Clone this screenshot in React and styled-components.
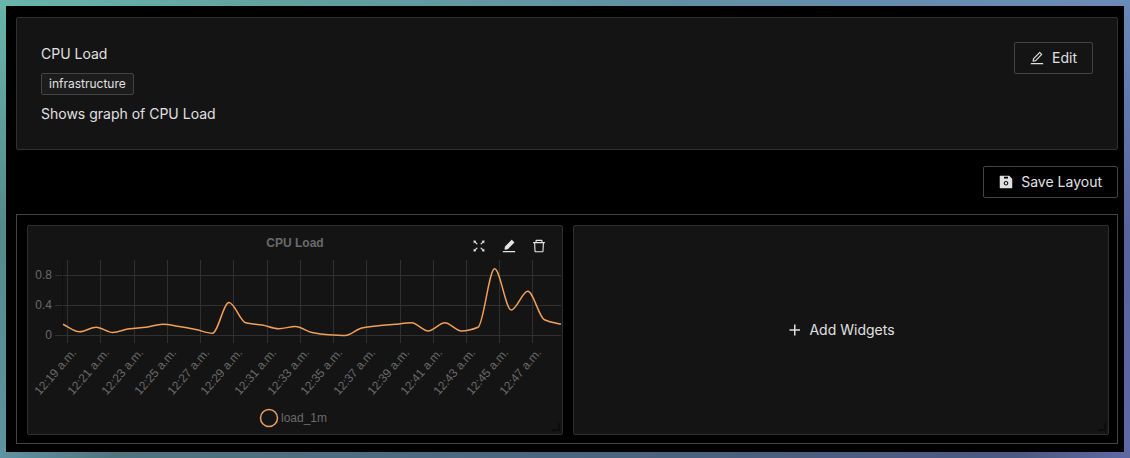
import React from "react";
import styled, { createGlobalStyle } from "styled-components";
import {
  AiOutlineEdit,
  AiFillSave,
  AiOutlineFullscreen,
  AiFillEdit,
  AiOutlineDelete,
} from "react-icons/ai";

const GlobalStyle = createGlobalStyle`
  * { box-sizing: border-box; }
  body {
    margin: 0;
    font-family: Inter, "Liberation Sans", sans-serif;
    font-size: 14px;
    line-height: 22px;
    color: #e0e0e0;
    background: #000;
  }
`;

const Backdrop = styled.div`
  min-height: 100vh;
  padding: 6px;
  background:
    linear-gradient(90deg, #68b5aa, #62a09f 25%, #6190a4 60%, #6a8ab8 100%) top / 100% 6px no-repeat,
    linear-gradient(90deg, #5f93a0, #4e7480 10%, #4a657e 50%, #4c5882 90%, #6068a4 100%) bottom / 100% 6px no-repeat,
    linear-gradient(180deg, #68b5aa, #558a8c 50%, #5f93a0 100%) left / 6px 100% no-repeat,
    linear-gradient(180deg, #6a8ab8, #58639a 50%, #6068a4 100%) right / 6px 100% no-repeat;
`;

const Page = styled.main`
  display: flex;
  flex-direction: column;
  gap: 16px;
  min-height: calc(100vh - 12px);
  padding: 11px 6px 8px 10px;
  background: #000;
`;

const SummaryCard = styled.section`
  display: flex;
  justify-content: space-between;
  align-items: flex-start;
  padding: 24px;
  border: 1px solid #303030;
  border-radius: 2px;
  background: #141414;
`;

const Details = styled.div`
  display: flex;
  flex-direction: column;
  align-items: flex-start;
  gap: 8px;
  padding-top: 1px;
`;

const Line = styled.p`
  margin: 0;
`;

const Title = styled.h1`
  margin: 0;
  font-size: 14px;
  font-weight: 400;
`;

const Tag = styled.span`
  padding: 0 7px;
  border: 1px solid #434343;
  border-radius: 2px;
  background: #1c1c1c;
  font-size: 12px;
  line-height: 20px;
`;

const Button = styled.button`
  display: inline-flex;
  align-items: center;
  gap: 7px;
  height: 32px;
  padding: 0 15px 0 14px;
  border: 1px solid ${(p) => (p.$plain ? "transparent" : "#434343")};
  border-radius: 2px;
  background: transparent;
  color: inherit;
  font: inherit;
  cursor: pointer;

  svg {
    width: 16px;
    height: 16px;
  }
`;

const Actions = styled.div`
  display: flex;
  justify-content: flex-end;
`;

const Board = styled.section`
  display: grid;
  grid-template-columns: 1fr 1fr;
  gap: 10px;
  padding: 10px 8px 8px 10px;
  border: 1px solid #434343;
`;

const Panel = styled.article`
  position: relative;
  display: flex;
  flex-direction: column;
  align-items: stretch;
  justify-content: center;
  border: 1px solid #303030;
  border-radius: 2px;
  background: #141414;

  &::after {
    content: "";
    position: absolute;
    right: 2px;
    bottom: 3px;
    width: 6px;
    height: 6px;
    border-right: 2px solid #0c0c0c;
    border-bottom: 2px solid #0c0c0c;
  }
`;

const AddButton = styled(Button)`
  align-self: center;
`;

const Tools = styled.div`
  position: absolute;
  top: 12px;
  right: 15px;
  display: flex;
  gap: 14px;
`;

const ToolButton = styled.button`
  display: flex;
  padding: 0;
  border: 0;
  background: transparent;
  color: #e4e4e4;
  font-size: 16px;
  cursor: pointer;
`;

const Chart = styled.svg`
  display: block;
  width: 100%;
  height: auto;
  font-family: "Liberation Sans", Arial, sans-serif;
  font-size: 12px;
  fill: #6a6a6a;
`;

const gridX = [39, 72, 106, 139, 172, 205, 239, 272, 305, 338, 372, 405, 438, 471, 504];
const yTicks = [
  ["0.8", 49],
  ["0.4", 79],
  ["0", 109],
];

const step = 16.6;
const loads = [
  0.15, 0.05, 0.11, 0.04, 0.09, 0.11, 0.15, 0.12, 0.08, 0.03, 0.44, 0.17, 0.14, 0.09, 0.12,
  0.04, 0.01, 0.0, 0.1, 0.13, 0.15, 0.17, 0.06, 0.17, 0.06, 0.11, 0.89, 0.34, 0.59, 0.21, 0.15,
];

// Monotone cubic interpolation, so that the curve never overshoots a reading.
function curve(values) {
  const pts = values.map((v, i) => [35 + i * step, 109.5 - v * 75]);
  const slopes = pts.slice(1).map((p, i) => (p[1] - pts[i][1]) / step);
  const tangents = pts.map((_, i) => {
    if (i === 0) return slopes[0];
    if (i === pts.length - 1) return slopes[i - 1];
    const a = slopes[i - 1];
    const b = slopes[i];
    return a * b <= 0 ? 0 : (2 * a * b) / (a + b);
  });
  return pts.reduce((d, [x, y], i) => {
    if (i === 0) return `M${x} ${y}`;
    const [px, py] = pts[i - 1];
    const h = step / 3;
    return `${d}C${px + h} ${py + tangents[i - 1] * h} ${x - h} ${y - tangents[i] * h} ${x} ${y}`;
  }, "");
}

function PlusIcon() {
  return (
    <svg viewBox="0 0 16 16" aria-hidden="true">
      <path d="M8.75 2.5V13.5M3.5 8H14" fill="none" stroke="currentColor" strokeWidth="1.5" />
    </svg>
  );
}

function LoadChart() {
  return (
    <Chart viewBox="0 0 534 208" role="img" aria-label="CPU Load">
      <text x="267" y="21" textAnchor="middle" fontWeight="700">CPU Load</text>
      <g stroke="#303030">
        {gridX.map((x) => (
          <path key={x} d={`M${x + 0.5} 34V117`} />
        ))}
        {yTicks.map(([label, y]) => (
          <path key={label} d={`M27 ${y + 0.5}H533`} />
        ))}
      </g>
      <path d="M34.5 34V109" stroke="#0f0f0f" />
      {yTicks.map(([label, y]) => (
        <text key={label} x="24" y={y + 4} textAnchor="end">{label}</text>
      ))}
      {gridX.map((x, i) => (
        <text key={x} transform={`translate(${x + 10} 127) rotate(-49)`} textAnchor="end">
          {`12:${19 + i * 2} a.m.`}
        </text>
      ))}
      <path d={curve(loads)} fill="none" stroke="#f0a058" strokeWidth="1.5" />
      <circle cx="241" cy="192" r="8.5" fill="none" stroke="#e8a060" strokeWidth="1.5" />
      <text x="253" y="196">load_1m</text>
    </Chart>
  );
}

export default function App() {
  return (
    <>
      <GlobalStyle />
      <Backdrop>
        <Page>
          <SummaryCard>
            <Details>
              <Title>CPU Load</Title>
              <Tag>infrastructure</Tag>
              <Line>Shows graph of CPU Load</Line>
            </Details>
            <Button type="button"><AiOutlineEdit />Edit</Button>
          </SummaryCard>
          <Actions>
            <Button type="button"><AiFillSave />Save Layout</Button>
          </Actions>
          <Board>
            <Panel>
              <LoadChart />
              <Tools>
                <ToolButton type="button" aria-label="Full screen"><AiOutlineFullscreen /></ToolButton>
                <ToolButton type="button" aria-label="Edit widget"><AiFillEdit /></ToolButton>
                <ToolButton type="button" aria-label="Delete widget"><AiOutlineDelete /></ToolButton>
              </Tools>
            </Panel>
            <Panel>
              <AddButton type="button" $plain><PlusIcon />Add Widgets</AddButton>
            </Panel>
          </Board>
        </Page>
      </Backdrop>
    </>
  );
}
